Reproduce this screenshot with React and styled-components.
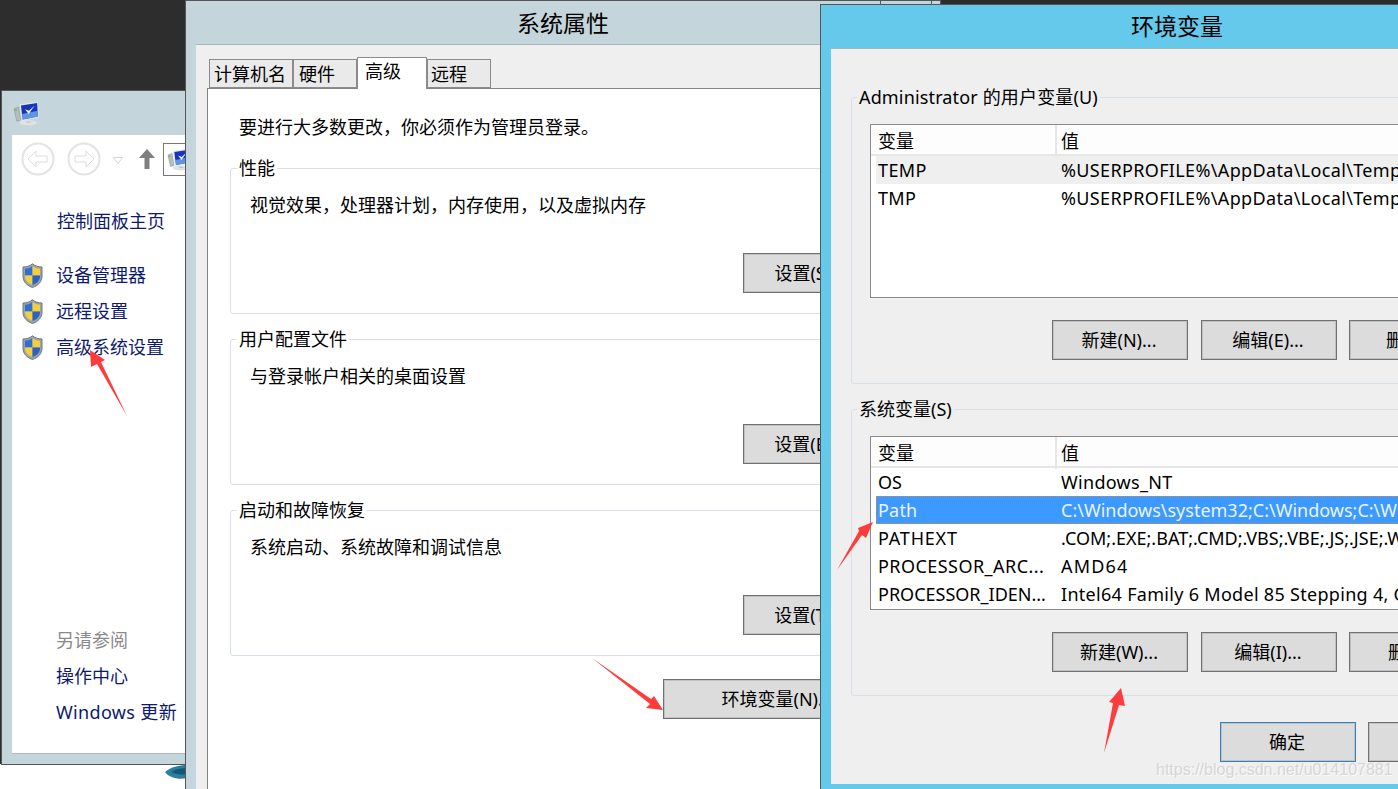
import React from "react";
import styled, { createGlobalStyle } from "styled-components";

const Global = createGlobalStyle`
  html, body { margin: 0; padding: 0; background: #fff; }
  body { font-family: "Noto Sans", "Noto Sans CJK SC", sans-serif; font-size: 18px; line-height: 26px; color: #000; }
`;

const Desktop = styled.div`
  position: relative;
  width: 1398px;
  height: 789px;
  overflow: hidden;
  background: linear-gradient(#2d2d2d 0 764px, #fff 764px);
`;

const WindowFrame = styled.section`
  position: absolute;
  left: ${(p) => p.$left}px;
  top: ${(p) => p.$top}px;
  width: ${(p) => p.$width}px;
  height: ${(p) => p.$height}px;
  box-sizing: border-box;
  border: 1px solid #555;
  background: ${(p) => p.$chrome};
  display: flex;
  flex-direction: column;
`;

/* control panel window */
const IconBar = styled.div`
  height: 44px;
  flex: none;
  display: flex;
  align-items: center;
  padding-left: 11px;
`;
const PanelBody = styled.div`
  flex: 1;
  margin: 0 0 10px 10px;
  background: #fff;
  border-bottom: 1px solid #aeb8c2;
  display: flex;
  flex-direction: column;
  padding-bottom: 28px;
`;
const Toolbar = styled.div`
  height: 48px;
  flex: none;
  display: flex;
  align-items: center;
  padding-left: 9px;
  overflow: hidden;
`;
const NavCircle = styled.svg`
  width: 34px;
  height: 34px;
  flex: none;
  margin-right: 12px;
`;
const DropTri = styled.svg`
  width: 10px;
  height: 7px;
  flex: none;
  margin: 2px 16px 0 0;
`;
const UpArrow = styled.svg`
  width: 16px;
  height: 20px;
  flex: none;
  margin-right: 8px;
`;
const Crumb = styled.div`
  width: 40px;
  height: 31px;
  flex: none;
  border: 1px solid #777;
  display: flex;
  align-items: center;
  padding-left: 3px;
`;
const HomeLink = styled.a`
  display: block;
  margin: 25px 0 18px 45px;
  color: #0e1a6c;
  line-height: 26px;
`;
const TaskList = styled.div`
  display: flex;
  flex-direction: column;
  gap: 10px;
  padding-left: 10px;
  margin-top: 10px;
`;
const Task = styled.a`
  display: flex;
  align-items: center;
  gap: 13px;
  color: #0e1a6c;
  height: 26px;
  white-space: nowrap;
`;
const SeeAlso = styled.div`
  margin-top: auto;
  padding-left: 44px;
  display: flex;
  flex-direction: column;
  gap: 10px;
  white-space: nowrap;
`;
const SeeTitle = styled.div`
  color: #8a8a8a;
`;
const SeeLink = styled.a`
  color: #0e1a6c;
  letter-spacing: ${(p) => p.$track || 0}px;
`;
const Blob = styled.svg`
  position: absolute;
  left: 163px;
  top: 764px;
  width: 24px;
  height: 16px;
`;

/* dialogs */
const TitleBar = styled.div`
  flex: none;
  height: ${(p) => p.$h}px;
  font-size: 23px;
  line-height: ${(p) => p.$lh}px;
  text-align: center;
`;
const CaptionDivider = styled.span`
  position: absolute;
  top: 0;
  left: ${(p) => p.$left}px;
  width: 1px;
  height: 4px;
  background: #555;
`;
const Client = styled.div`
  margin-left: 10px;
  margin-right: 10px;
  background: #efefef;
  border-top: 1px solid #a9b4bb;
  box-sizing: border-box;
  height: ${(p) => p.$h}px;
  padding: ${(p) => p.$pad || 0};
  flex: none;
`;
const TabStrip = styled.div`
  display: flex;
  align-items: flex-end;
  height: 31px;
  margin: 12px 0 0 13px;
  position: relative;
  z-index: 1;
`;
const Tab = styled.div`
  box-sizing: border-box;
  width: ${(p) => p.$w}px;
  padding-left: ${(p) => p.$pad}px;
  height: ${(p) => (p.$active ? 32 : 29)}px;
  margin-bottom: ${(p) => (p.$active ? -1 : 0)}px;
  border: 1px solid #8b8b8b;
  border-bottom: ${(p) => (p.$active ? "none" : "1px solid #8b8b8b")};
  background: ${(p) => (p.$active ? "#fff" : "#eaeaea")};
  line-height: ${(p) => (p.$active ? 26 : 28)}px;
  white-space: nowrap;
`;
const Pane = styled.div`
  margin-left: 11px;
  border: 1px solid #858585;
  background: #fff;
  height: 720px;
  box-sizing: border-box;
  padding: 25px 0 0 22px;
`;
const Intro = styled.p`
  margin: 0 0 15px 9px;
  line-height: 26px;
`;
const Group = styled.fieldset`
  box-sizing: border-box;
  margin: 0 0 ${(p) => p.$mb}px;
  min-width: 0;
  width: ${(p) => p.$w}px;
  padding: ${(p) => p.$pad};
  border: 1px solid #d7e0e6;
  border-radius: 3px;
`;
const Legend = styled.legend`
  padding: 0 2px;
  margin-left: ${(p) => p.$ml}px;
  line-height: 26px;
  white-space: nowrap;
  letter-spacing: ${(p) => p.$track || 0}px;
`;
const GroupText = styled.div`
  padding-top: 11px;
  line-height: 26px;
`;
const ButtonRow = styled.div`
  display: flex;
  justify-content: ${(p) => (p.$lead ? "flex-start" : "flex-end")};
  gap: 13px;
  margin-top: ${(p) => p.$mt}px;
  padding-left: ${(p) => p.$lead || 0}px;
  & > button:nth-child(3) { margin-left: -1px; }
`;
const Btn = styled.button`
  box-sizing: border-box;
  width: ${(p) => p.$w || 136}px;
  height: 40px;
  flex: none;
  padding: 0 2px 0 0;
  background: #dcdcdc;
  border: 1px solid ${(p) => (p.$primary ? "#3c7fb1" : "#707070")};
  box-shadow: inset 0 0 0 1px ${(p) => (p.$primary ? "rgba(60,127,177,.25)" : "rgba(112,112,112,.25)")};
  border-radius: 0;
  color: #000;
  font: inherit;
  white-space: nowrap;
`;
const ListTable = styled.div`
  box-sizing: border-box;
  height: 174px;
  margin-top: 14px;
  border: 1px solid #8a8a8a;
  background: #fff;
  overflow: hidden;
`;
const HeadRow = styled.div`
  display: grid;
  grid-template-columns: 186px 1fr;
  height: 31px;
  box-sizing: border-box;
  border-bottom: 2px solid #e6e6e6;
  background: #fdfdfd;
  line-height: 32px;
`;
const HeadCell = styled.div`
  padding-left: ${(p) => p.$pad}px;
  border-right: ${(p) => (p.$divider ? "2px solid #e6e6e6" : "none")};
`;
const Row = styled.div`
  display: grid;
  grid-template-columns: 179px 1fr;
  margin-left: 5px;
  height: 28px;
  box-sizing: border-box;
  line-height: 29px;
  white-space: nowrap;
  background: ${(p) => (p.$selected ? "#3b99ff" : p.$hot ? "#efefef" : "transparent")};
  color: ${(p) => (p.$selected ? "#eaf4ff" : "#000")};
  outline: ${(p) => (p.$selected ? "1px dotted #d98a3a" : "none")};
  outline-offset: -1px;
`;
const Cell = styled.div`
  padding-left: ${(p) => p.$pad}px;
  overflow: hidden;
  letter-spacing: ${(p) => p.$track || 0}px;
`;
const Footer = styled.div`
  display: flex;
  gap: 12px;
  padding-left: 369px;
  margin-top: 26px;
`;
const Watermark = styled.div`
  position: absolute;
  left: 1156px;
  top: 758px;
  font-family: "Liberation Sans", sans-serif;
  font-size: 16px;
  line-height: 24px;
  color: #d6d6d6;
  text-shadow: 1px 1px 0 #fafafa;
  white-space: nowrap;
`;
const Annotations = styled.svg`
  position: absolute;
  left: 0;
  top: 0;
  width: 1398px;
  height: 789px;
  pointer-events: none;
`;

const Shield = () => (
  <svg width="21" height="25" viewBox="0 0 21 25">
    <path d="M10.5 .8C8 3 4.5 4 1 4v9c0 6 4 9.500 9.500 11.500C16 22.500 20 19 20 13V4c-3.500 0-7-1-9.500-3.200z" fill="#9aa3ab" stroke="#6d7882" strokeWidth="1" />
    <path d="M10.500 3C8.500 4.700 6 5.500 3 5.700V12.500h7.500z" fill="#2f6fd0" />
    <path d="M10.500 3c2 1.700 4.500 2.500 7.500 2.700V12.500h-7.500z" fill="#f4cf3c" />
    <path d="M3 12.500h7.500v9.500C6 20.500 3 17.500 3 13z" fill="#f4cf3c" />
    <path d="M18 12.500h-7.500v9.500c4.500-1.500 7.500-4.500 7.500-9z" fill="#2c62c4" />
  </svg>
);

const Monitor = ({ size = 24 }) => (
  <svg width={size} height={size} viewBox="0 0 24 24">
    <ellipse cx="14" cy="21" rx="8" ry="2.500" fill="#dfe2e4" />
    <path d="M1 8l4-1.500 2 12-3.500 1z" fill="#b9bdc0" stroke="#8f969b" strokeWidth=".6" />
    <path d="M1.500 8.500h2v1.500h-2z" fill="#6fbf5a" />
    <path d="M6 4l17-2.500 .8 14.500L8 19.500z" fill="#e3e8ee" />
    <path d="M7.300 5l15-2.200 .6 12.500L9 18z" fill="#1634bd" />
    <path d="M8.500 13l14.300-3 .1 5.300L9 18z" fill="#5f96e4" />
    <path d="M11 8.500l3.500 4.500 5.500-8-5.200 5z" fill="#f3f7ff" />
    <path d="M12 19.500h4l.5 1.500h-4z" fill="#c3c8cc" />
  </svg>
);

const Nav = ({ dir }) => (
  <NavCircle viewBox="0 0 34 34">
    <circle cx="17" cy="17" r="15.500" fill="#fff" stroke="#e3e3e3" strokeWidth="2" />
    <path
      d={dir === "back" ? "M7 17l8-8v5h11v6H15v5z" : "M27 17l-8-8v5H8v6h11v5z"}
      fill="#fff"
      stroke="#dcdcdc"
      strokeWidth="1"
    />
  </NavCircle>
);

const userVars = [
  { k: "TEMP", kTrack: 0.4, v: "%USERPROFILE%\\AppData\\Local\\Temp", hot: true, track: 0.35 },
  { k: "TMP", kTrack: 0.3, v: "%USERPROFILE%\\AppData\\Local\\Temp", track: 0.35 },
];
const sysVars = [
  { k: "OS", v: "Windows_NT", track: 0.3 },
  { k: "Path", kTrack: 0.2, v: "C:\\Windows\\system32;C:\\Windows;C:\\Windows\\System32\\Wbem", selected: true },
  { k: "PATHEXT", kTrack: 0.8, v: ".COM;.EXE;.BAT;.CMD;.VBS;.VBE;.JS;.JSE;.WSF;.WSH;.MSC" },
  { k: "PROCESSOR_ARC...", kTrack: 0.45, v: "AMD64", track: 1.2 },
  { k: "PROCESSOR_IDEN...", v: "Intel64 Family 6 Model 85 Stepping 4, GenuineIntel", track: 0.3 },
];

const VarTable = ({ rows }) => (
  <ListTable>
    <HeadRow>
      <HeadCell $pad={7} $divider>变量</HeadCell>
      <HeadCell $pad={4}>值</HeadCell>
    </HeadRow>
    {rows.map((r) => (
      <Row key={r.k} $selected={r.selected} $hot={r.hot}>
        <Cell $pad={2} $track={r.kTrack}>{r.k}</Cell>
        <Cell $pad={6} $track={r.track}>{r.v}</Cell>
      </Row>
    ))}
  </ListTable>
);

const SettingGroup = ({ legend, text, button }) => (
  <Group $w={668} $mb={12} $pad="0 18px 20px 19px">
    <Legend $ml={-13}>{legend}</Legend>
    <GroupText>{text}</GroupText>
    <ButtonRow $mt={35}>
      <Btn>{button}</Btn>
    </ButtonRow>
  </Group>
);

const VarGroup = ({ legend, rows, buttons, mb, track }) => (
  <Group $w={652} $mb={mb} $pad="0 18px 23px 18px">
    <Legend $ml={-13} $track={track}>{legend}</Legend>
    <VarTable rows={rows} />
    <ButtonRow $mt={22} $lead={182}>
      {buttons.map((b) => (
        <Btn key={b}>{b}</Btn>
      ))}
    </ButtonRow>
  </Group>
);

export default function App() {
  return (
    <Desktop>
      <Global />

      <WindowFrame $left={1} $top={90} $width={200} $height={675} $chrome="#c4d5dc">
        <IconBar>
          <Monitor size={26} />
        </IconBar>
        <PanelBody>
          <Toolbar>
            <Nav dir="back" />
            <Nav dir="forward" />
            <DropTri viewBox="0 0 10 7">
              <path d="M.5 .5h9L5 6.500z" fill="#fff" stroke="#d5d5d5" />
            </DropTri>
            <UpArrow viewBox="0 0 16 20">
              <path d="M8 0l8 9h-5.500v11h-5V9H0z" fill="#7f7f7f" />
            </UpArrow>
            <Crumb>
              <Monitor size={24} />
            </Crumb>
          </Toolbar>
          <HomeLink>控制面板主页</HomeLink>
          <TaskList>
            <Task><Shield />设备管理器</Task>
            <Task><Shield />远程设置</Task>
            <Task><Shield />高级系统设置</Task>
          </TaskList>
          <SeeAlso>
            <SeeTitle>另请参阅</SeeTitle>
            <SeeLink>操作中心</SeeLink>
            <SeeLink $track={0.35}>Windows 更新</SeeLink>
          </SeeAlso>
        </PanelBody>
      </WindowFrame>
      <Blob viewBox="0 0 24 16">
        <path d="M2 8c6-5 14-7 22-7v13c-8 2-18 0-22-6z" fill="#2a7f9e" />
        <path d="M8 8c5-3 10-4 16-4v6c-6 1-12 0-16-2z" fill="#0f5878" />
      </Blob>

      <WindowFrame $left={185} $top={0} $width={756} $height={800} $chrome="#c4d5dc">
        <TitleBar $h={43} $lh={44}>系统属性</TitleBar>
        <CaptionDivider $left={694} />
        <CaptionDivider $left={745} />
        <Client $h={755}>
          <TabStrip>
            <Tab $w={84} $pad={4}>计算机名</Tab>
            <Tab $w={64} $pad={5}>硬件</Tab>
            <Tab $w={70} $pad={7} $active>高级</Tab>
            <Tab $w={64} $pad={3}>远程</Tab>
          </TabStrip>
          <Pane>
            <Intro>要进行大多数更改，你必须作为管理员登录。</Intro>
            <SettingGroup legend="性能" text="视觉效果，处理器计划，内存使用，以及虚拟内存" button="设置(S)..." />
            <SettingGroup legend="用户配置文件" text="与登录帐户相关的桌面设置" button="设置(E)..." />
            <SettingGroup legend="启动和故障恢复" text="系统启动、系统故障和调试信息" button="设置(T)..." />
            <ButtonRow $mt={23} $lead={433}>
              <Btn $w={230}>环境变量(N)...</Btn>
            </ButtonRow>
          </Pane>
        </Client>
      </WindowFrame>

      <WindowFrame $left={820} $top={4} $width={714} $height={790} $chrome="#65c9eb">
        <TitleBar $h={43} $lh={42}>环境变量</TitleBar>
        <Client $h={736} $pad="35px 0 0 20px">
          <VarGroup
            legend="Administrator 的用户变量(U)"
            track={0.15}
            rows={userVars}
            buttons={["新建(N)...", "编辑(E)...", "删除(D)"]}
            mb={12}
          />
          <VarGroup
            legend="系统变量(S)"
            rows={sysVars}
            buttons={["新建(W)...", "编辑(I)...", "删除(L)"]}
            mb={0}
          />
          <Footer>
            <Btn $primary>确定</Btn>
            <Btn>取消</Btn>
          </Footer>
        </Client>
      </WindowFrame>

      <Watermark>https://blog.csdn.net/u014107881</Watermark>

      <Annotations viewBox="0 0 1398 789">
        <g fill="#ff3b3b">
          <polygon points="90,350 105,360 101,362 127,416 97,364 91,367" />
          <polygon points="592,658 651,699 654,696 663,710 646,708 650,704" />
          <polygon points="873,522 866,538 862,535 837,570 859,531 858,528" />
          <polygon points="1121,688 1125,706 1119,705 1104,753 1113,703 1109,702" />
        </g>
      </Annotations>
    </Desktop>
  );
}
